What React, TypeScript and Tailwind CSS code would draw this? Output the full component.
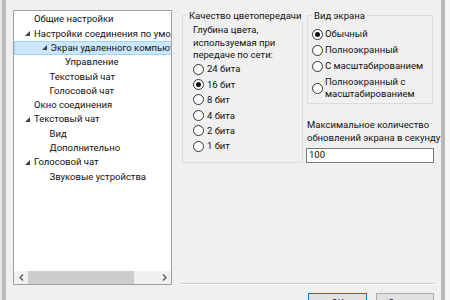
import React from "react";

type Node = { label: string; level: number; expanded?: boolean; selected?: boolean };

const tree: Node[] = [
	{ label: "Общие настройки", level: 0 },
	{ label: "Настройки соединения по умолчанию", level: 0, expanded: true },
	{ label: "Экран удаленного компьютера", level: 1, expanded: true, selected: true },
	{ label: "Управление", level: 2 },
	{ label: "Текстовый чат", level: 1 },
	{ label: "Голосовой чат", level: 1 },
	{ label: "Окно соединения", level: 0 },
	{ label: "Текстовый чат", level: 0, expanded: true },
	{ label: "Вид", level: 1 },
	{ label: "Дополнительно", level: 1 },
	{ label: "Голосовой чат", level: 0, expanded: true },
	{ label: "Звуковые устройства", level: 1 },
];

const indent = ["pl-[11px]", "pl-[26.5px]", "pl-[42px]"];

const Expander = () => (
	<svg width="5" height="5" viewBox="0 0 5 5" className="block">
		<polygon points="5,0 5,5 0,5" fill="#404040" />
	</svg>
);

const Radio = ({ checked }: { checked?: boolean }) => (
	<span className="w-[11px] h-[11px] shrink-0 rounded-full border border-[#333] bg-white grid place-content-center">
		{checked && <span className="w-[5px] h-[5px] rounded-full bg-[#111] block" />}
	</span>
);

const Chevron = ({ dir }: { dir: "left" | "right" }) => (
	<svg width="5" height="7" viewBox="0 0 5 7" className="block">
		<polyline
			points={dir === "left" ? "4,0.5 1,3.5 4,6.5" : "1,0.5 4,3.5 1,6.5"}
			fill="none"
			stroke="#606060"
			strokeWidth="1.5"
		/>
	</svg>
);

const depthOptions = ["24 бита", "16 бит", "8 бит", "4 бита", "2 бита", "1 бит"];

export default function App() {
	return (
		<div
			className="w-[450px] h-[300px] overflow-hidden bg-[#f0f0f0] flex text-[#111] text-[9.5px]"
			style={{ fontFamily: '"Segoe UI", Roboto, sans-serif' }}
		>
			{/* window frame, left */}
			<div className="w-[2px] bg-[#e6e6e6] shrink-0" />
			<div className="w-[4px] bg-[#b9b9b9] shrink-0" />

			{/* tree */}
			<div className="ml-[7px] mt-[10px] w-[159px] h-[275px] shrink-0 border border-[#a0a0a0] bg-white flex flex-col">
				<div className="flex-1 overflow-hidden pt-[1px]">
					<div className="w-[194px]">
						{tree.map((n, i) => (
							<div
								key={i}
								className={`h-[14.3px] flex items-center whitespace-nowrap ${indent[n.level]} ${
									n.selected ? "bg-[#cce8ff] border border-[#99d1ff]" : ""
								}`}
							>
								<span className="w-[9px] shrink-0 flex items-center">
									{n.expanded && <Expander />}
								</span>
								<span className="leading-none">{n.label}</span>
							</div>
						))}
					</div>
				</div>
				<div className="h-[13px] shrink-0 bg-[#f0f0f0] flex items-center">
					<div className="w-[14px] h-full grid place-content-center">
						<Chevron dir="left" />
					</div>
					<div className="flex-1 h-full flex">
						<div className="w-[106px] h-full bg-[#cdcdcd]" />
					</div>
					<div className="w-[14px] h-full grid place-content-center">
						<Chevron dir="right" />
					</div>
				</div>
			</div>

			{/* settings */}
			<div className="ml-[9px] w-[253px] h-[300px] shrink-0 flex flex-col">
				<div className="flex pt-[9px]">
					<fieldset className="ml-[1px] w-[121px] min-w-0 shrink-0 h-[154px] border border-[#dcdcdc] pl-[10px]">
						<legend className="ml-[-6px] px-[2px] leading-[13px] whitespace-nowrap">
							Качество цветопередачи
						</legend>
						<div className="mt-[2px] leading-[12.5px] whitespace-nowrap">
							Глубина цвета,
							<br />
							используемая при
							<br />
							передаче по сети:
						</div>
						<div className="flex flex-col">
							{depthOptions.map((o, i) => (
								<div key={o} className="h-[15.4px] flex items-center gap-[3px]">
									<Radio checked={i === 1} />
									<span className="leading-none">{o}</span>
								</div>
							))}
						</div>
					</fieldset>

					<div className="ml-[3px] w-[128px] shrink-0 flex flex-col">
						<fieldset className="ml-[1px] w-[126px] min-w-0 h-[95px] border border-[#dcdcdc] pl-[4px]">
							<legend className="ml-[0px] px-[2px] leading-[13px] whitespace-nowrap">Вид экрана</legend>
							<div className="mt-[4px] flex flex-col whitespace-nowrap">
								<div className="h-[16px] flex items-center gap-[2px]">
									<Radio checked />
									<span className="leading-none">Обычный</span>
								</div>
								<div className="h-[16px] flex items-center gap-[2px]">
									<Radio />
									<span className="leading-none">Полноэкранный</span>
								</div>
								<div className="h-[16px] flex items-center gap-[2px]">
									<Radio />
									<span className="leading-none">С масштабированием</span>
								</div>
								<div className="mt-[2px] h-[24px] flex items-center gap-[2px]">
									<Radio />
									<span className="leading-[12px]">
										Полноэкранный с
										<br />
										масштабированием
									</span>
								</div>
							</div>
						</fieldset>
						<div className="mt-[14px] ml-[1px] leading-[13px] whitespace-nowrap">
							Максимальное количество
							<br />
							обновлений экрана в секунду:
						</div>
						<div className="mt-[3.5px] w-[128px] h-[15px] border border-[#7a7a7a] bg-white pl-[2px] flex items-center leading-none">
							100
						</div>
					</div>
				</div>

				<div className="flex-1" />

				<div className="h-[17px] shrink-0">
					<div className="h-px bg-[#c8c8c8]" />
					<div className="h-px bg-white" />
					<div className="pt-[8px] flex justify-end gap-[9px]">
						<button className="w-[59px] h-[20px] border border-[#0078d7] bg-[#e1e1e1] leading-none">
							OK
						</button>
						<button className="w-[58px] h-[20px] border border-[#adadad] bg-[#e1e1e1] leading-none">
							Отмена
						</button>
					</div>
				</div>
			</div>

			{/* window frame, right */}
			<div className="ml-[7px] w-[4px] bg-[#b9b9b9] shrink-0" />
			<div className="w-[5px] bg-[#f7f7f7] shrink-0" />
		</div>
	);
}
